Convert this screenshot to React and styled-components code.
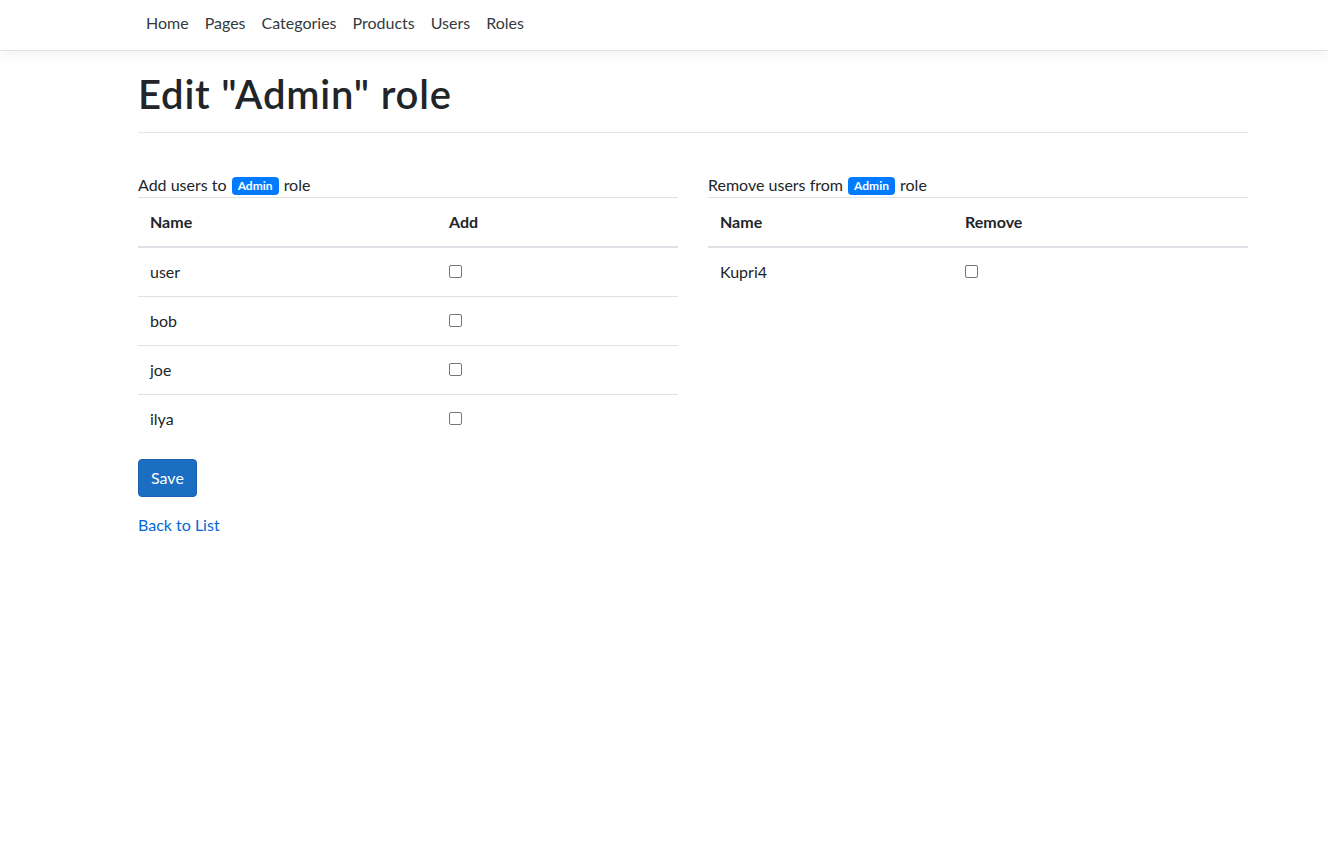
import React from "react";
import styled, { createGlobalStyle } from "styled-components";

const Global = createGlobalStyle`
  html, body { margin: 0; padding: 0; background: #fff; }
  body {
    font-family: Lato, "Liberation Sans", sans-serif;
    font-size: 16px;
    line-height: 1.5;
    color: #212529;
  }
  * { box-sizing: border-box; }
`;

const Navbar = styled.header`
  height: 51px;
  background: #fff;
  border-bottom: 1px solid #dee2e6;
  box-shadow: 0 4px 12px rgba(0, 0, 0, 0.05);
  margin-bottom: 16px;
`;

const Container = styled.div`
  width: 1110px;
  margin-left: 138px;
`;

const NavList = styled.nav`
  display: flex;
  padding-top: 11px;
`;

const NavLink = styled.a`
  display: block;
  padding: 0 8px;
  line-height: 24px;
  color: #343a40;
  text-decoration: none;
  font-size: 16px;
`;

const Title = styled.h1`
  margin: 0;
  font-size: 40px;
  line-height: 54px;
  font-weight: 600;
  letter-spacing: 0.8px;
  color: #212529;
`;

const Rule = styled.hr`
  margin: 11px 0 40px;
  border: 0;
  border-top: 1px solid rgba(0, 0, 0, 0.1);
`;

const Columns = styled.div`
  display: grid;
  grid-template-columns: 540px 540px;
  column-gap: 30px;
`;

const Label = styled.div`
  line-height: 24px;
`;

const Badge = styled.span`
  display: inline-block;
  background: #007bff;
  color: #fff;
  font-size: 12px;
  font-weight: 700;
  line-height: 1;
  padding: 3px 6px;
  border-radius: 4px;
  vertical-align: 1px;
  margin: 0 1px;
`;

const Table = styled.table`
  width: 100%;
  border-collapse: collapse;
  margin-bottom: 16px;
`;

const Th = styled.th`
  text-align: left;
  font-weight: 700;
  padding: 12px;
  line-height: 24px;
  border-top: 1px solid #dee2e6;
  border-bottom: 2px solid #dee2e6;
  width: ${(p) => p.$w || "auto"};
`;

const Td = styled.td`
  padding: 12px;
  line-height: 24px;
  border-top: 1px solid #dee2e6;
  vertical-align: top;
`;

const Check = styled.input.attrs({ type: "checkbox" })`
  appearance: none;
  -webkit-appearance: none;
  display: block;
  width: 13px;
  height: 13px;
  margin: 5px 0 0 0;
  border: 1px solid #767676;
  border-radius: 2px;
  background: #fff;
`;

const SaveButton = styled.button`
  display: block;
  font-family: inherit;
  font-size: 16px;
  line-height: 24px;
  padding: 6px 12px;
  color: #fff;
  background: #1b6ec2;
  border: 1px solid #1861ac;
  border-radius: 4px;
  margin-bottom: 16px;
`;

const BackLink = styled.a`
  color: #0366d6;
  text-decoration: none;
  line-height: 24px;
`;

const addUsers = ["user", "bob", "joe", "ilya"];
const removeUsers = ["Kupri4"];

function UserTable({ users, action, firstWidth }) {
  return (
    <Table>
      <thead>
        <tr>
          <Th $w={firstWidth}>Name</Th>
          <Th>{action}</Th>
        </tr>
      </thead>
      <tbody>
        {users.map((u) => (
          <tr key={u}>
            <Td>{u}</Td>
            <Td>
              <Check />
            </Td>
          </tr>
        ))}
      </tbody>
    </Table>
  );
}

export default function App() {
  return (
    <>
      <Global />
      <Navbar>
        <Container>
          <NavList>
            {["Home", "Pages", "Categories", "Products", "Users", "Roles"].map((n) => (
              <NavLink key={n} href="#">
                {n}
              </NavLink>
            ))}
          </NavList>
        </Container>
      </Navbar>
      <Container>
        <Title>Edit "Admin" role</Title>
        <Rule />
        <Columns>
          <div>
            <Label>
              Add users to <Badge>Admin</Badge> role
            </Label>
            <UserTable users={addUsers} action="Add" firstWidth="299px" />
            <SaveButton>Save</SaveButton>
            <BackLink href="#">Back to List</BackLink>
          </div>
          <div>
            <Label>
              Remove users from <Badge>Admin</Badge> role
            </Label>
            <UserTable users={removeUsers} action="Remove" firstWidth="245px" />
          </div>
        </Columns>
      </Container>
    </>
  );
}
